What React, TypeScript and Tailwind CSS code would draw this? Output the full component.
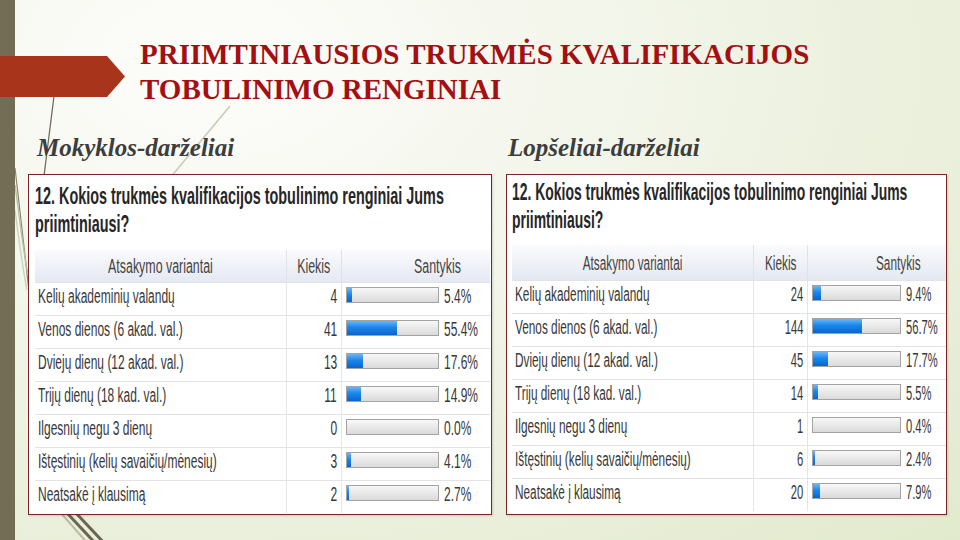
import React from 'react';

type Row = { label: string; count: number; pct: number };

const SCHOOLS: Row[] = [
  { label: 'Kelių akademinių valandų', count: 4, pct: 5.4 },
  { label: 'Venos dienos (6 akad. val.)', count: 41, pct: 55.4 },
  { label: 'Dviejų dienų (12 akad. val.)', count: 13, pct: 17.6 },
  { label: 'Trijų dienų (18 kad. val.)', count: 11, pct: 14.9 },
  { label: 'Ilgesnių negu 3 dienų', count: 0, pct: 0 },
  { label: 'Ištęstinių (kelių savaičių/mėnesių)', count: 3, pct: 4.1 },
  { label: 'Neatsakė  į klausimą', count: 2, pct: 2.7 },
];

const NURSERIES: Row[] = [
  { label: 'Kelių akademinių valandų', count: 24, pct: 9.4 },
  { label: 'Venos dienos (6 akad. val.)', count: 144, pct: 56.7 },
  { label: 'Dviejų dienų (12 akad. val.)', count: 45, pct: 17.7 },
  { label: 'Trijų dienų (18 kad. val.)', count: 14, pct: 5.5 },
  { label: 'Ilgesnių negu 3 dienų', count: 1, pct: 0.4 },
  { label: 'Ištęstinių (kelių savaičių/mėnesių)', count: 6, pct: 2.4 },
  { label: 'Neatsakė  į klausimą', count: 20, pct: 7.9 },
];

type Look = {
  box: string;
  title: string;
  titleGap: string;
  head: string;
  c1: string;
  c2: string;
  c3: string;
  santykis: string;
  bar: string;
  label: string;
  num: string;
  headText: string;
};

const LEFT_LOOK: Look = {
  box: 'w-[464px] pt-[7px] pl-[6px] pr-[1px] pb-[1px]',
  title: 'scale-x-[0.6]',
  titleGap: 'mb-[12px]',
  head: 'h-[32px]',
  c1: 'w-[251px]',
  c2: 'w-[55px]',
  c3: 'w-[149px]',
  santykis: 'pl-[72px]',
  bar: 'w-[93px]',
  label: 'scale-x-[0.6]',
  num: 'scale-x-[0.6]',
  headText: 'scale-x-[0.62]',
};

const RIGHT_LOOK: Look = {
  box: 'w-[441px] pt-[3px] pl-[5px] pr-0 pb-[3px]',
  title: 'scale-x-[0.58]',
  titleGap: 'mb-[11px]',
  head: 'h-[35px]',
  c1: 'w-[241px]',
  c2: 'w-[54px]',
  c3: 'w-[139px]',
  santykis: 'pl-[68px]',
  bar: 'w-[89px]',
  label: 'scale-x-[0.59]',
  num: 'scale-x-[0.56]',
  headText: 'scale-x-[0.59]',
};

export default function App() {
  return (
    <div className="relative flex w-[960px] h-[540px] overflow-hidden bg-[radial-gradient(ellipse_at_22%_12%,#fdfdfb_0%,#f2f5e9_40%,#e2eacd_100%)]">
      <Decor />

      <div className="relative z-10 w-[15px] h-full shrink-0 bg-[#736d55]" />

      <div className="relative z-10 flex flex-col flex-1">
        {/* Title */}
        <div className="flex items-start pt-[37px]">
          <svg className="-ml-[15px] mt-[19px] shrink-0" width="125" height="41" viewBox="0 0 125 41">
            <polygon points="0,0 107,0 125,20.5 107,41 0,41" fill="#a8341b" />
          </svg>
          <h1 className="ml-[15px] font-['Liberation_Serif','Times_New_Roman',serif] font-bold text-[29px] leading-[35px] text-[#a30f12]">
            PRIIMTINIAUSIOS TRUKMĖS KVALIFIKACIJOS
            <br />
            TOBULINIMO RENGINIAI
          </h1>
        </div>

        {/* Two survey screenshots */}
        <div className="flex items-start mt-[27px]">
          <div className="ml-[13px] flex flex-col">
            <h2 className="pl-[9px] font-['Liberation_Serif','Times_New_Roman',serif] italic font-bold text-[25px] leading-[28px] text-[#3d3d3d]">
              Mokyklos-darželiai
            </h2>
            <SurveyPanel rows={SCHOOLS} look={LEFT_LOOK} />
          </div>
          <div className="ml-[14px] flex flex-col">
            <h2 className="pl-[2px] font-['Liberation_Serif','Times_New_Roman',serif] italic font-bold text-[25px] leading-[28px] text-[#3d3d3d]">
              Lopšeliai-darželiai
            </h2>
            <SurveyPanel rows={NURSERIES} look={RIGHT_LOOK} />
          </div>
        </div>
      </div>
    </div>
  );
}

function SurveyPanel({ rows, look }: { rows: Row[]; look: Look }) {
  return (
    <div
      className={`mt-[12px] bg-white border border-[#7d2225] shadow-[1px_1px_2px_rgba(0,0,0,0.15)] font-['Liberation_Sans',Arial,sans-serif] ${look.box}`}
    >
      <div className={`font-bold text-[24px] leading-[28px] text-[#262626] ${look.titleGap}`}>
        <span className={`block whitespace-nowrap origin-left ${look.title}`}>
          12. Kokios trukmės kvalifikacijos tobulinimo renginiai Jums
        </span>
        <span className={`block whitespace-nowrap origin-left ${look.title}`}>priimtiniausi?</span>
      </div>

      {/* Header */}
      <div
        className={`flex text-[20px] leading-[20px] text-[#444] bg-[linear-gradient(to_bottom,#fbfbfd,#e4e8f2)] ${look.head}`}
      >
        <div className={`flex items-center justify-center ${look.c1}`}>
          <span className={`inline-block whitespace-nowrap origin-center ${look.headText}`}>Atsakymo variantai</span>
        </div>
        <div className={`flex items-center justify-center border-l border-[#dfe2ea] ${look.c2}`}>
          <span className={`inline-block whitespace-nowrap origin-center ${look.headText}`}>Kiekis</span>
        </div>
        <div className={`flex items-center border-l border-[#dfe2ea] ${look.c3} ${look.santykis}`}>
          <span className={`inline-block whitespace-nowrap origin-left ${look.headText}`}>Santykis</span>
        </div>
      </div>

      {rows.map((row) => (
        <div key={row.label} className="flex h-[33px] border-t border-[#e3e3e3] text-[#383838] text-[20px] leading-[20px]">
          <div className={`pt-[3px] pl-[3px] ${look.c1}`}>
            <span className={`inline-block whitespace-nowrap origin-left ${look.label}`}>{row.label}</span>
          </div>
          <div className={`flex justify-end pt-[3px] pr-[4px] border-l border-[#e6e6e6] ${look.c2}`}>
            <span className={`inline-block whitespace-nowrap origin-right ${look.num}`}>{row.count}</span>
          </div>
          <div className={`flex items-start pl-[4px] border-l border-[#e6e6e6] ${look.c3}`}>
            <div
              className={`mt-[4px] h-[16px] shrink-0 overflow-hidden border border-[#a3a3a3] bg-[linear-gradient(to_bottom,#f8f8f8,#dadada)] ${look.bar}`}
            >
              <div
                className="h-full bg-[linear-gradient(to_bottom,#6bb6f6,#1a87ee_45%,#0b64cb)]"
                style={{ width: `${row.pct}%` }}
              />
            </div>
            <span className={`ml-[5px] mt-[3px] inline-block whitespace-nowrap origin-left ${look.num}`}>
              {row.pct.toFixed(1)}%
            </span>
          </div>
        </div>
      ))}
    </div>
  );
}

function Decor() {
  return (
    <svg className="absolute inset-0 z-0 pointer-events-none" width="960" height="540" viewBox="0 0 960 540">
      {/* thin strokes of the slide theme */}
      <line x1="55" y1="88" x2="36" y2="240" stroke="#6e6a55" strokeWidth="1.2" />
      <line x1="230" y1="106" x2="160" y2="190" stroke="#c9ccba" strokeWidth="1.6" />
      <path d="M15 168 C 20 210, 24 250, 30 300" stroke="#8a866e" strokeWidth="1.2" fill="none" />
      <path d="M15 185 C 20 220, 23 250, 28 275" stroke="#b9bfa3" strokeWidth="1.4" fill="none" />
      <path d="M15 210 C 19 240, 22 265, 27 290" stroke="#cdd3b8" strokeWidth="1.4" fill="none" />
      {/* heavy strokes at the bottom */}
      <line x1="66" y1="512" x2="98" y2="546" stroke="#6b6650" strokeWidth="3" />
      <line x1="75" y1="512" x2="107" y2="546" stroke="#6b6650" strokeWidth="3" />
      <line x1="60" y1="512" x2="90" y2="546" stroke="#b9bc9f" strokeWidth="2" />
    </svg>
  );
}
